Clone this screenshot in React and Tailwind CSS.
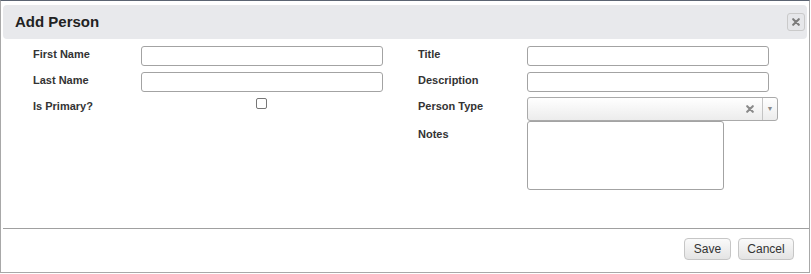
import React from 'react';

const XMark = ({ size = 8, color = '#7a7a7a' }) => (
  <svg width={size} height={size} viewBox="0 0 10 10">
    <path d="M1.5 1.5 L8.5 8.5 M8.5 1.5 L1.5 8.5" stroke={color} strokeWidth="2.6" strokeLinecap="round" />
  </svg>
);

const Field = ({ label, children, className = '', labelClass = 'w-[108px]' }) => (
  <div className={`flex items-start ${className}`}>
    <label className={`shrink-0 text-[11px] leading-4 font-bold text-[#333] ${labelClass}`}>{label}</label>
    {children}
  </div>
);

const TextInput = () => (
  <input type="text" className="w-[242px] h-[20px] border border-[#a3a3a3] rounded-[3px] bg-white px-1 text-[12px] outline-none" />
);

const App = () => {
  return (
    <div className="w-[811px] h-[274px] bg-white" style={{ fontFamily: '"Liberation Sans", Arial, sans-serif' }}>
      <div className="w-[810px] h-[273px] border border-[#a8a8a8] border-t-[#5b6472] flex flex-col">
        <div className="mx-[2px] mt-[4px] h-[34px] bg-[#e8e9ec] rounded-[4px] flex items-center justify-between pl-[12px] pr-[2px]">
          <h1 className="text-[15px] font-bold text-[#222]">Add Person</h1>
          <button className="w-[18px] h-[18px] border border-[#cacaca] rounded-[3px] bg-[#e6e7ea] flex items-center justify-center">
            <XMark size={8} color="#7c7c7c" />
          </button>
        </div>

        <div className="flex-1 flex pl-[32px] pt-[7px]">
          <div className="w-[350px] flex flex-col">
            <Field label="First Name" className="mb-[6px]">
              <TextInput />
            </Field>
            <Field label="Last Name" className="mb-[5px]">
              <TextInput />
            </Field>
            <Field label="Is Primary?" labelClass="w-[108px] pt-[1px]">
              <div className="w-[242px] flex justify-center">
                <input type="checkbox" className="w-[11px] h-[11px] mt-[1px] ml-[-2px] appearance-none border border-[#777] rounded-[2px] bg-white" />
              </div>
            </Field>
          </div>

          <div className="ml-[35px] flex flex-col">
            <Field label="Title" className="mb-[6px]" labelClass="w-[109px]">
              <TextInput />
            </Field>
            <Field label="Description" className="mb-[5px]" labelClass="w-[109px]">
              <TextInput />
            </Field>
            <Field label="Person Type" labelClass="w-[109px] pt-[1px]">
              <div className="w-[251px] h-[24px] border border-[#aaa] rounded-[3px] bg-gradient-to-b from-white to-[#ececec] flex items-center justify-end">
                <span className="mr-[8px] flex items-center"><XMark size={8} color="#8a8a8a" /></span>
                <span className="h-full border-l border-[#c4c4c4] w-[15px] flex items-center justify-center text-[7px] text-[#8a8a8a]">▼</span>
              </div>
            </Field>
            <Field label="Notes" labelClass="w-[109px] pt-[5px]">
              <textarea className="w-[197px] h-[69px] border border-[#a3a3a3] rounded-[3px] bg-white resize-none outline-none" />
            </Field>
          </div>
        </div>

        <div className="ml-[2px] h-[44px] border-t border-[#a0a0a0] flex items-start justify-end gap-[7px] pt-[9px] pr-[15px]">
          <button className="w-[47px] h-[22px] border border-[#c6c6c6] rounded-[4px] bg-gradient-to-b from-[#fafafa] to-[#e4e4e4] text-[12px] text-[#333]">Save</button>
          <button className="w-[56px] h-[22px] border border-[#c6c6c6] rounded-[4px] bg-gradient-to-b from-[#fafafa] to-[#e4e4e4] text-[12px] text-[#333]">Cancel</button>
        </div>
      </div>
    </div>
  );
};

export default App;
